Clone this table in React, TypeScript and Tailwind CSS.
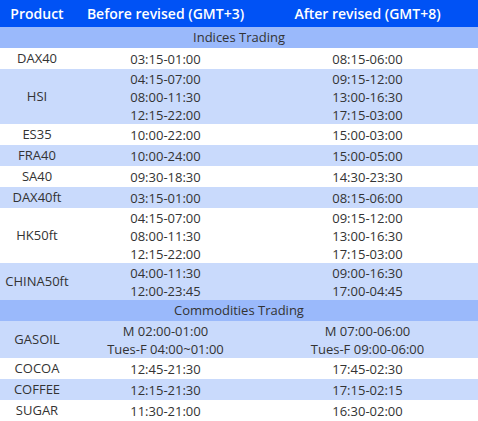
const indices = [
  { name: "DAX40", before: ["03:15-01:00"], after: ["08:15-06:00"], h: "h-[21px]" },
  { name: "HSI", before: ["04:15-07:00", "08:00-11:30", "12:15-22:00"], after: ["09:15-12:00", "13:00-16:30", "17:15-03:00"], h: "h-[55px]" },
  { name: "ES35", before: ["10:00-22:00"], after: ["15:00-03:00"], h: "h-[21px]" },
  { name: "FRA40", before: ["10:00-24:00"], after: ["15:00-05:00"], h: "h-[21px]" },
  { name: "SA40", before: ["09:30-18:30"], after: ["14:30-23:30"], h: "h-[21px]" },
  { name: "DAX40ft", before: ["03:15-01:00"], after: ["08:15-06:00"], h: "h-[21px]" },
  { name: "HK50ft", before: ["04:15-07:00", "08:00-11:30", "12:15-22:00"], after: ["09:15-12:00", "13:00-16:30", "17:15-03:00"], h: "h-[55px]" },
  { name: "CHINA50ft", before: ["04:00-11:30", "12:00-23:45"], after: ["09:00-16:30", "17:00-04:45"], h: "h-[37px]" },
];

const commodities = [
  { name: "GASOIL", before: ["M 02:00-01:00", "Tues-F 04:00~01:00"], after: ["M 07:00-06:00", "Tues-F 09:00-06:00"], h: "h-[37px]" },
  { name: "COCOA", before: ["12:45-21:30"], after: ["17:45-02:30"], h: "h-[21px]" },
  { name: "COFFEE", before: ["12:15-21:30"], after: ["17:15-02:15"], h: "h-[21px]" },
  { name: "SUGAR", before: ["11:30-21:00"], after: ["16:30-02:00"], h: "h-[21px]" },
];

type Row = { name: string; before: string[]; after: string[]; h: string };

const Rows = ({ rows, shaded }: { rows: Row[]; shaded: number }) => (
  <>
    {rows.map((row, i) => (
      <div
        key={row.name}
        className={`grid grid-cols-[74px_183px_1fr] items-center ${row.h} ${i % 2 === shaded ? "bg-[#c9dafc]" : "bg-white"}`}
      >
        <div className="text-center">{row.name}</div>
        <div className="flex flex-col items-center leading-[18px]">
          {row.before.map((t) => (
            <span key={t}>{t}</span>
          ))}
        </div>
        <div className="flex flex-col items-center leading-[18px]">
          {row.after.map((t) => (
            <span key={t}>{t}</span>
          ))}
        </div>
      </div>
    ))}
  </>
);

export default function App() {
  return (
    <div className="w-[478px] h-[421px] bg-white text-[13px] text-[#333] font-['Open_Sans',sans-serif] overflow-hidden">
      <div className="grid grid-cols-[74px_183px_1fr] items-center h-[27px] bg-[#0052f5] text-white text-[14px] font-semibold">
        <div className="text-center">Product</div>
        <div className="text-center">Before revised (GMT+3)</div>
        <div className="text-center">After revised (GMT+8)</div>
      </div>
      <div className="h-[21px] flex items-center justify-center bg-[#9ab9fb]">Indices Trading</div>
      <Rows rows={indices} shaded={1} />
      <div className="h-[21px] flex items-center justify-center bg-[#9ab9fb]">Commodities Trading</div>
      <Rows rows={commodities} shaded={0} />
    </div>
  );
}
